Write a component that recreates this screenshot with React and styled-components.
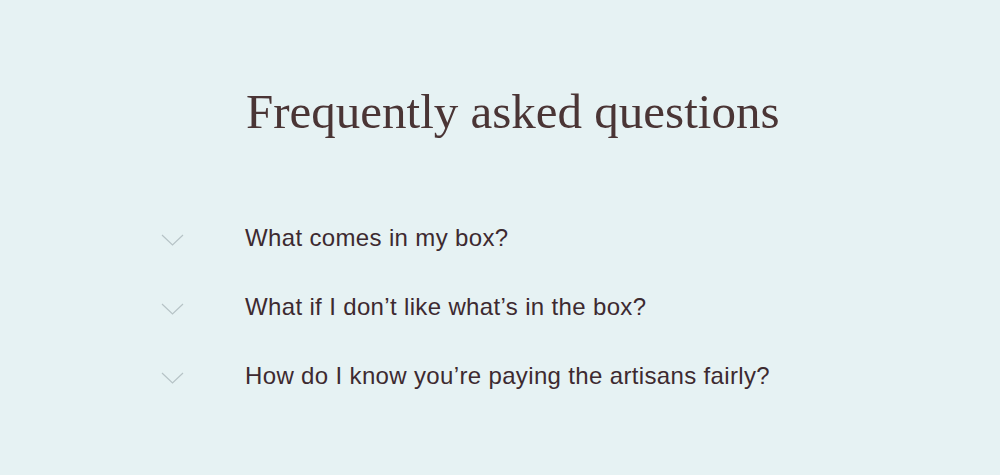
import styled, { createGlobalStyle } from 'styled-components';

const GlobalStyle = createGlobalStyle`
  html, body {
    margin: 0;
    padding: 0;
    background: #e6f2f3;
  }
`;

const Page = styled.div`
  width: 1000px;
  height: 475px;
  background: #e6f2f3;
  padding: 82px 0 0 161px;
  box-sizing: border-box;
`;

const Heading = styled.h1`
  margin: 0 0 81px 85px;
  font-family: "Liberation Serif", serif;
  font-weight: 400;
  font-size: 49px;
  line-height: 60px;
  color: #4a3535;
`;

const List = styled.ul`
  list-style: none;
  margin: 0;
  padding: 0;
  display: flex;
  flex-direction: column;
  gap: 40px;
`;

const Item = styled.li`
  display: grid;
  grid-template-columns: 84px auto;
  align-items: center;
  height: 29px;
`;

const Chevron = styled.svg`
  width: 23px;
  height: 12px;
  margin-top: 4px;
`;

const Question = styled.span`
  font-family: "Liberation Sans", Arial, sans-serif;
  font-size: 24px;
  letter-spacing: 0.35px;
  color: #3d2a30;
`;

const questions = [
  'What comes in my box?',
  'What if I don\u2019t like what\u2019s in the box?',
  'How do I know you\u2019re paying the artisans fairly?',
];

export default function App() {
  return (
    <Page>
      <GlobalStyle />
      <Heading>Frequently asked questions</Heading>
      <List>
        {questions.map((q) => (
          <Item key={q}>
            <Chevron viewBox="0 0 23 12">
              <path d="M1 1 L11.5 11 L22 1" fill="none" stroke="#b6c3c6" strokeWidth="1.2" />
            </Chevron>
            <Question>{q}</Question>
          </Item>
        ))}
      </List>
    </Page>
  );
}
